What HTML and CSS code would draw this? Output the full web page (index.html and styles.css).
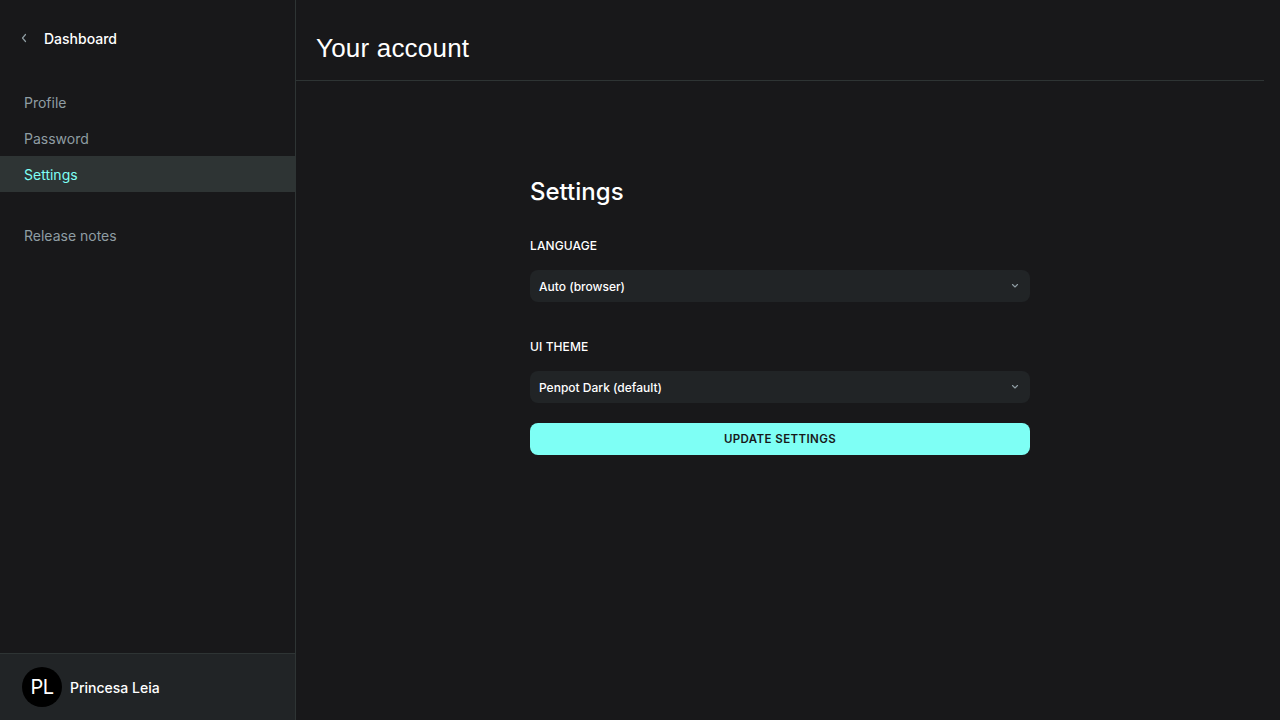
FILE: index.html
```html
<!DOCTYPE html>
<html lang="en">
<head>
<meta charset="utf-8">
<title>Your account</title>
<link rel="stylesheet" href="styles.css">
</head>
<body>
<div class="app">
  <aside class="sidebar">
    <div class="sidebar-top">
      <a class="back">
        <svg class="back-icon" width="8" height="10" viewBox="0 0 8 10"><path d="M5.5 1.5 L2.5 5 L5.5 8.5" fill="none" stroke="#8f9da3" stroke-width="1.2" stroke-linecap="round" stroke-linejoin="round"/></svg>
        <span>Dashboard</span>
      </a>
      <nav class="nav">
        <a class="nav-item">Profile</a>
        <a class="nav-item">Password</a>
        <a class="nav-item active">Settings</a>
      </nav>
      <nav class="nav nav-secondary">
        <a class="nav-item">Release notes</a>
      </nav>
    </div>
    <div class="profile">
      <div class="avatar">PL</div>
      <span class="profile-name">Princesa Leia</span>
    </div>
  </aside>
  <main class="main">
    <header class="header">
      <h1 class="title">Your account</h1>
    </header>
    <section class="content">
      <form class="form">
        <h2 class="form-title">Settings</h2>
        <label class="field-label">LANGUAGE</label>
        <div class="select">
          <span>Auto (browser)</span>
          <svg width="8" height="6" viewBox="0 0 8 6"><path d="M1.5 1.5 L4 4 L6.5 1.5" fill="none" stroke="#8f9da3" stroke-width="1.1" stroke-linecap="round" stroke-linejoin="round"/></svg>
        </div>
        <label class="field-label second">UI THEME</label>
        <div class="select">
          <span>Penpot Dark (default)</span>
          <svg width="8" height="6" viewBox="0 0 8 6"><path d="M1.5 1.5 L4 4 L6.5 1.5" fill="none" stroke="#8f9da3" stroke-width="1.1" stroke-linecap="round" stroke-linejoin="round"/></svg>
        </div>
        <button type="button" class="btn">UPDATE SETTINGS</button>
      </form>
    </section>
  </main>
</div>
</body>
</html>
```
FILE: styles.css
```css
* { box-sizing: border-box; }
html, body { margin: 0; padding: 0; height: 100%; }
body {
  background: #18181a;
  font-family: "Inter", "Noto Sans", sans-serif;
  color: #ffffff;
}
.app { display: flex; height: 720px; }
.sidebar {
  width: 296px;
  flex-shrink: 0;
  border-right: 1px solid #2e3434;
  display: flex;
  flex-direction: column;
  justify-content: space-between;
}
.sidebar-top { display: flex; flex-direction: column; }
.back {
  display: flex;
  align-items: center;
  gap: 16px;
  padding: 29px 0 0 20px;
  height: 47px;
  font-size: 14px;
  font-weight: 500;
  color: #ffffff;
}
.back-icon { display: block; }
.nav { display: flex; flex-direction: column; margin-top: 38px; }
.nav-secondary { margin-top: 26px; }
.nav-item {
  display: flex;
  align-items: center;
  height: 35.5px;
  padding-left: 24px;
  font-size: 14px;
  color: #8f9da3;
}
.nav-item.active { background: #2e3434; color: #7efff5; height: 36px; }
.profile {
  height: 67px;
  background: #212426;
  border-top: 1px solid #2e3434;
  display: flex;
  align-items: center;
  gap: 8px;
  padding-left: 22px;
}
.avatar {
  width: 40px; height: 40px;
  border-radius: 50%;
  background: #000;
  color: #fff;
  display: flex; align-items: center; justify-content: center;
  font-size: 20px;
  font-weight: 400;
  letter-spacing: -0.5px;
}
.profile-name { font-size: 14px; font-weight: 500; color: #fff; }
.main { flex: 1; display: flex; flex-direction: column; padding-right: 16px; }
.header {
  height: 81px;
  border-bottom: 1px solid #2e3434;
  display: flex;
  align-items: center;
  padding-left: 20px;
}
.title {
  margin: 0;
  font-family: "Liberation Sans", sans-serif;
  font-size: 26px;
  font-weight: 400;
  letter-spacing: 0.2px;
  padding-top: 16px;
}
.content { display: flex; justify-content: center; padding-top: 96px; }
.form { width: 500px; display: flex; flex-direction: column; }
.form-title { margin: 0 0 31px; font-size: 24px; font-weight: 500; line-height: 30px; }
.field-label {
  font-size: 12px;
  font-weight: 500;
  line-height: 16px;
  color: #ffffff;
  margin-bottom: 16px;
  letter-spacing: 0.1px;
}
.field-label.second { margin-top: 37px; margin-bottom: 16px; }
.select {
  height: 32px;
  background: #212426;
  border-radius: 8px;
  display: flex;
  align-items: center;
  justify-content: space-between;
  padding: 0 11px 0 9px;
  font-size: 12px;
  font-weight: 500;
  color: #ffffff;
}
.btn {
  margin-top: 20px;
  height: 32px;
  border: 0;
  border-radius: 8px;
  background: #7efff5;
  color: #18181a;
  font-family: inherit;
  font-size: 11.5px;
  font-weight: 600;
  letter-spacing: 0.4px;
}
```
